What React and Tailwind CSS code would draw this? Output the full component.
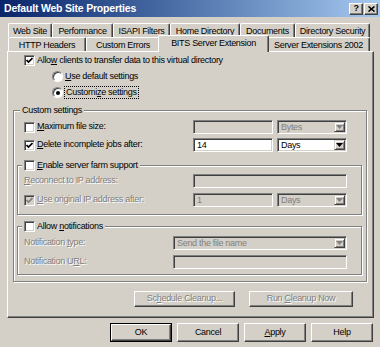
import React from 'react';

const sunken = 'border border-t-[#808080] border-l-[#808080] border-b-white border-r-white shadow-[inset_1px_1px_0_#404040,inset_-1px_-1px_0_#d4d0c8]';
const raised = 'border border-t-white border-l-white border-b-[#404040] border-r-[#404040] shadow-[inset_-1px_-1px_0_#808080]';
const grey = 'text-[#808080] [text-shadow:1px_1px_0_#fff]';
const etched = 'border border-[#808080] shadow-[inset_1px_1px_0_#fff,1px_1px_0_#fff]';

const Check = ({ checked, disabled }) => (
  <span className={`flex w-[11px] h-[11px] shrink-0 items-center justify-center ${sunken} ${disabled ? 'bg-[#d4d0c8]' : 'bg-white'}`}>
    {checked && (
      <svg width="7" height="7" viewBox="0 0 7 7">
        <path d="M0.5 3 L2.5 5 L6.5 1" fill="none" stroke={disabled ? '#808080' : '#000'} strokeWidth="1.7" />
      </svg>
    )}
  </span>
);

const Radio = ({ checked }) => (
  <span className="flex w-[11px] h-[11px] shrink-0 items-center justify-center rounded-full border border-t-[#808080] border-l-[#808080] border-b-white border-r-white bg-white shadow-[inset_1px_1px_0_#404040]">
    {checked && <span className="w-[4px] h-[4px] rounded-full bg-black" />}
  </span>
);

const Field = ({ w, value, disabled }) => (
  <div className={`${w} h-[14px] ${sunken} ${disabled ? 'bg-[#d4d0c8] text-[#808080]' : 'bg-white'} flex items-center px-[3px] leading-none`}>
    {value}
  </div>
);

const Combo = ({ w, value, disabled }) => (
  <div className={`${w} h-[14px] ${sunken} p-[1px] flex items-stretch ${disabled ? 'bg-[#d4d0c8] text-[#808080]' : 'bg-white'}`}>
    <span className="flex-1 flex items-center pl-[2px] leading-none">{value}</span>
    <span className="w-[11px] flex items-center justify-center bg-[#d4d0c8] border border-t-[#d4d0c8] border-l-[#d4d0c8] border-b-[#404040] border-r-[#404040] shadow-[inset_1px_1px_0_#fff,inset_-1px_-1px_0_#808080]">
      <svg width="7" height="4" viewBox="0 0 7 4">
        <path d="M0 0H7L3.5 4Z" fill={disabled ? '#808080' : '#000'} />
      </svg>
    </span>
  </div>
);

const Btn = ({ w, children, disabled, def }) => (
  <div className={`${w} h-full ${def ? 'border border-black' : ''}`}>
    <div className={`h-full w-full flex items-center justify-center bg-[#d4d0c8] ${raised} ${disabled ? grey : ''}`}>
      <span>{children}</span>
    </div>
  </div>
);

const Tab = ({ w, children }) => (
  <div className={`${w} h-[14px] shrink-0 flex justify-center leading-[14px] rounded-t-[2px] border-t border-l border-r border-t-white border-l-white border-r-[#404040] shadow-[inset_-1px_0_0_#808080]`}>
    {children}
  </div>
);

export default function App() {
  return (
    <div className="w-[380px] h-[347px] overflow-hidden bg-[#d4d0c8] text-black font-['Liberation_Sans',Arial,sans-serif] text-[9px] tracking-[-0.3px]">
      {/* title bar */}
      <div className="h-[17px] flex items-center justify-between bg-gradient-to-r from-[#0a246a] to-[#a6caf0] pl-[4px] pr-[2px]">
        <span className="text-white font-bold text-[10.5px] tracking-[-0.2px]">Default Web Site Properties</span>
        <div className="flex">
          <div className={`w-[14px] h-[12px] flex items-center justify-center bg-[#d4d0c8] ${raised} font-bold text-[9px]`}>?</div>
          <div className={`w-[14px] h-[12px] ml-[1px] flex items-center justify-center bg-[#d4d0c8] ${raised}`}>
            <svg width="7" height="6" viewBox="0 0 7 6">
              <path d="M0.5 0.5L6.5 5.5M6.5 0.5L0.5 5.5" stroke="#000" strokeWidth="1.6" />
            </svg>
          </div>
        </div>
      </div>

      {/* tabs */}
      <div className="pt-[6px]">
        <div className="flex ml-[8px]">
          <Tab w="w-[44px]">Web Site</Tab>
          <Tab w="w-[61px]">Performance</Tab>
          <Tab w="w-[57px]">ISAPI Filters</Tab>
          <Tab w="w-[70px]">Home Directory</Tab>
          <Tab w="w-[55px]">Documents</Tab>
          <Tab w="w-[75px]">Directory Security</Tab>
        </div>
        <div className="flex ml-[8px] h-[14px]">
          <Tab w="w-[78px]">HTTP Headers</Tab>
          <Tab w="w-[74px]">Custom Errors</Tab>
          <div className="relative -top-[2px] -mx-[2px] w-[111px] h-[17px] shrink-0 flex justify-center leading-[14px] rounded-t-[2px] bg-[#d4d0c8] border-t border-l border-r border-t-white border-l-white border-r-[#404040] shadow-[inset_-1px_0_0_#808080]">
            BITS Server Extension
          </div>
          <Tab w="w-[103px]">Server Extensions 2002</Tab>
        </div>
      </div>

      {/* panel */}
      <div className="ml-[7px] w-[367px] h-[267px] border border-t-white border-l-white border-r-[#404040] border-b-[#404040] shadow-[inset_-1px_-1px_0_#808080]">
        <div className="mt-[2px] h-[13px] pl-[16px] flex items-center gap-[2px]">
          <Check checked />
          <span>Allo<span className="underline">w</span> clients to transfer data to this virtual directory</span>
        </div>
        <div className="mt-[3px] h-[13px] pl-[44px] flex items-center gap-[2px]">
          <Radio />
          <span><span className="underline">U</span>se default settings</span>
        </div>
        <div className="mt-[3px] h-[13px] pl-[44px] flex items-center gap-[1px]">
          <Radio checked />
          <span className="border border-dotted border-black px-[1px] leading-[11px]">Customi<span className="underline">z</span>e settings</span>
        </div>

        <fieldset className={`ml-[5px] mt-[5px] w-[354px] ${etched} pb-[6px]`}>
          <legend className="ml-[6px] px-[2px] h-[13px] leading-[13px] bg-[#d4d0c8]">Custom settings</legend>

          <div className="mt-[3px] h-[14px] flex items-center">
            <div className="w-[179px] pl-[10px] flex items-center gap-[2px]">
              <Check />
              <span><span className="underline">M</span>aximum file size:</span>
            </div>
            <div className="flex gap-[4px]">
              <Field w="w-[80px]" disabled />
              <Combo w="w-[70px]" value="Bytes" disabled />
            </div>
          </div>
          <div className="mt-[4px] h-[14px] flex items-center">
            <div className="w-[179px] pl-[10px] flex items-center gap-[2px]">
              <Check checked />
              <span><span className="underline">D</span>elete incomplete jobs after:</span>
            </div>
            <div className="flex gap-[4px]">
              <Field w="w-[80px]" value="14" />
              <Combo w="w-[70px]" value="Days" />
            </div>
          </div>

          <fieldset className={`ml-[3px] mt-[7px] w-[345px] ${etched} pb-[7px]`}>
            <legend className="ml-[4px] px-[2px] bg-[#d4d0c8]">
              <span className="flex items-center gap-[2px] h-[13px]">
                <Check />
                <span><span className="underline">E</span>nable server farm support</span>
              </span>
            </legend>
            <div className="mt-[2px] h-[14px] flex items-center">
              <div className={`w-[175px] pl-[6px] ${grey}`}><span className="underline">R</span>econnect to IP address:</div>
              <Field w="w-[154px]" disabled />
            </div>
            <div className="mt-[5px] h-[14px] flex items-center">
              <div className="w-[175px] pl-[6px] flex items-center gap-[2px]">
                <Check checked disabled />
                <span className={grey}><span className="underline">U</span>se original IP address after:</span>
              </div>
              <div className="flex gap-[4px]">
                <Field w="w-[80px]" value="1" disabled />
                <Combo w="w-[70px]" value="Days" disabled />
              </div>
            </div>
          </fieldset>

          <fieldset className={`ml-[3px] mt-[5px] w-[345px] ${etched} pb-[5px]`}>
            <legend className="ml-[4px] px-[2px] bg-[#d4d0c8]">
              <span className="flex items-center gap-[2px] h-[13px]">
                <Check />
                <span>Allow <span className="underline">n</span>otifications</span>
              </span>
            </legend>
            <div className="mt-[3px] h-[14px] flex items-center">
              <div className={`w-[155px] pl-[6px] ${grey}`}>Notification <span className="underline">t</span>ype:</div>
              <Combo w="w-[174px]" value="Send the file name" disabled />
            </div>
            <div className="mt-[5px] h-[14px] flex items-center">
              <div className={`w-[155px] pl-[6px] ${grey}`}>Notification U<span className="underline">R</span>L:</div>
              <Field w="w-[174px]" disabled />
            </div>
          </fieldset>
        </fieldset>

        <div className="mt-[9px] h-[16px] flex pl-[126px] gap-[14px]">
          <Btn w="w-[101px]" disabled>Sc<span className="underline">h</span>edule Cleanup...</Btn>
          <Btn w="w-[104px]" disabled>Run <span className="underline">C</span>leanup Now</Btn>
        </div>
      </div>

      {/* dialog buttons */}
      <div className="mt-[5px] h-[19px] flex pl-[110px] gap-[5px]">
        <Btn w="w-[62px]" def>OK</Btn>
        <Btn w="w-[62px]">Cancel</Btn>
        <Btn w="w-[62px]"><span className="underline">A</span>pply</Btn>
        <Btn w="w-[62px]">Help</Btn>
      </div>
    </div>
  );
}
